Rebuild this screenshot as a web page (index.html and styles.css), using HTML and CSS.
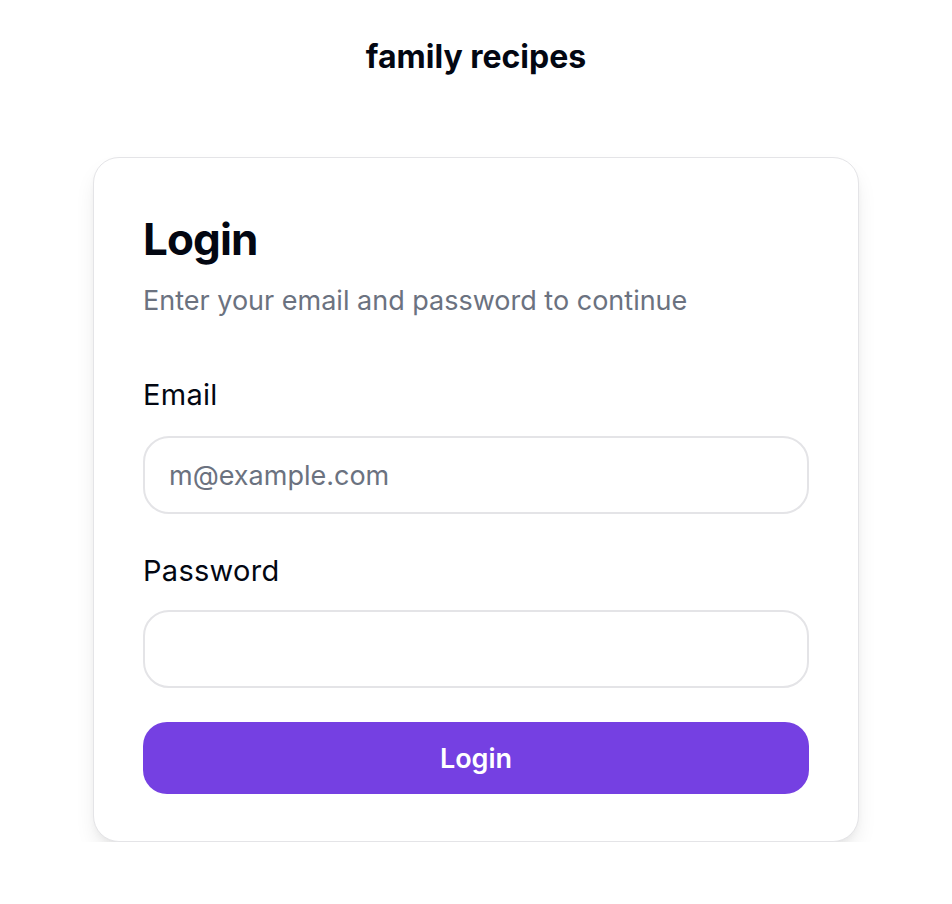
FILE: index.html
```html
<!DOCTYPE html>
<html lang="en">
<head>
<meta charset="utf-8">
<title>family recipes</title>
<link rel="stylesheet" href="styles.css">
</head>
<body>
<header class="site-header">
  <h1 class="brand">family recipes</h1>
</header>
<main class="page">
  <form class="card" onsubmit="return false;">
    <div class="card-head">
      <h2 class="card-title">Login</h2>
      <p class="card-desc">Enter your email and password to continue</p>
    </div>
    <div class="field">
      <label class="label" for="email">Email</label>
      <input class="input" id="email" type="email" placeholder="m@example.com">
    </div>
    <div class="field field-last">
      <label class="label" for="password">Password</label>
      <input class="input" id="password" type="password">
    </div>
    <button class="btn" type="submit">Login</button>
  </form>
</main>
</body>
</html>
```

FILE: styles.css
```css
* { box-sizing: border-box; }
html, body { margin: 0; padding: 0; background: #ffffff; }
body {
  font-family: "Inter", "Noto Sans", sans-serif;
  color: #030712;
}
.site-header {
  display: flex;
  justify-content: center;
  padding-top: 36px;
}
.brand {
  margin: 0;
  font-size: 32px;
  line-height: 42px;
  font-weight: 700;
  letter-spacing: 0;
  color: #030712;
}
.page {
  display: flex;
  justify-content: center;
  padding-top: 79px;
}
.card {
  width: 766px;
  background: #fff;
  border: 1px solid #e4e4e7;
  border-radius: 26px;
  box-shadow: 0 12px 22px -4px rgba(0,0,0,0.1), 0 4px 8px -3px rgba(0,0,0,0.06);
  padding: 49px 49px 47px;
  display: flex;
  flex-direction: column;
}
.card-head { display: flex; flex-direction: column; gap: 12px; margin-bottom: 58px; }
.card-title {
  margin: 0;
  font-size: 44px;
  line-height: 64px;
  font-weight: 700;
  letter-spacing: -0.02em;
  color: #030712;
}
.card-desc {
  margin: 0;
  font-size: 27px;
  line-height: 36px;
  color: #6b7280;
}
.field { display: flex; flex-direction: column; gap: 23px; margin-bottom: 39px; }
.field-last { gap: 21px; margin-bottom: 34px; }
.label {
  font-size: 29px;
  line-height: 36px;
  font-weight: 400;
  letter-spacing: 0.01em;
  color: #030712;
}
.input {
  height: 78px;
  width: 100%;
  border: 2px solid #e4e4e7;
  border-radius: 26px;
  padding: 0 24px;
  font-family: inherit;
  font-size: 27px;
  color: #030712;
  background: #fff;
  outline: none;
}
.input::placeholder { color: #6b7280; }
.btn {
  height: 72px;
  width: 100%;
  border: none;
  border-radius: 24px;
  background: #7540e2;
  color: #fff;
  font-family: inherit;
  font-size: 27px;
  font-weight: 600;
  cursor: pointer;
}
```
